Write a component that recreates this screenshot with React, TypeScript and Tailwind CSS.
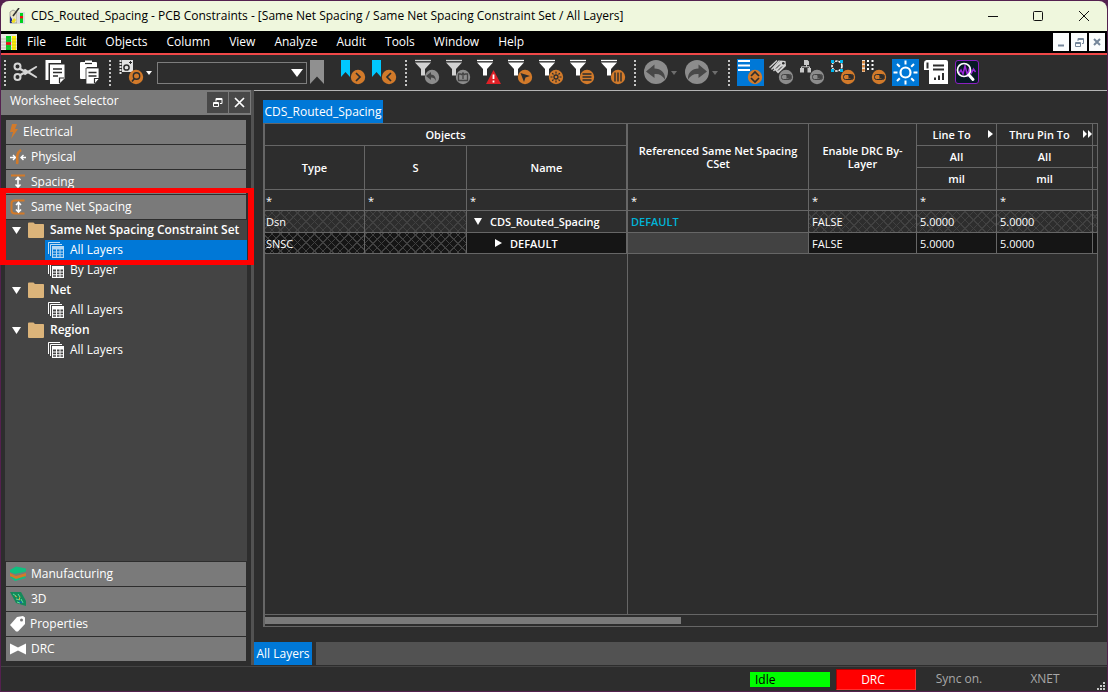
import type { ReactNode } from "react";

const HATCH =
  "bg-[repeating-linear-gradient(45deg,#414141_0_1px,transparent_1px_6px),repeating-linear-gradient(-45deg,#414141_0_1px,transparent_1px_6px)]";

const ORANGE = "#d27a2a";

function Icon({ children, w = 27 }: { children: ReactNode; w?: number }) {
  return (
    <svg width={w} height={27} viewBox={`0 0 ${w} 27`} fill="none" aria-hidden="true" className="shrink-0">
      {children}
    </svg>
  );
}

function ToolButton({ label, active, children }: { label: string; active?: boolean; children: ReactNode }) {
  return (
    <button type="button" aria-label={label} className={active ? "shrink-0 bg-[#0078d7]" : "shrink-0"}>
      <Icon>{children}</Icon>
    </button>
  );
}

function Grip() {
  return (
    <span className="h-[26px] w-[2px] shrink-0 bg-[repeating-linear-gradient(#c4c4c4_0_2px,transparent_2px_4px)]" />
  );
}

function Badge({ color = ORANGE, children }: { color?: string; children?: ReactNode }) {
  return (
    <>
      <circle cx="18" cy="18" r="7.2" fill={color} />
      {children}
    </>
  );
}

function Funnel({ color = "#fff" }: { color?: string }) {
  return (
    <>
      <path d="M1 1.500h16" stroke={color} strokeWidth="1.300" />
      <path d="M1 3.500h16l-6 6.500v6.500h-4v-6.500z" fill={color} />
    </>
  );
}

function Toggle({ color, ink }: { color: string; ink: string }) {
  return (
    <Badge color={color}>
      <rect x="13.500" y="15.500" width="10" height="5" rx="2" stroke={ink} strokeWidth="1" />
      <rect x="18" y="16" width="5" height="4" rx="1" fill={ink} />
      <path d="M18.500 17v2.500h2" stroke={color} strokeWidth=".5" />
    </Badge>
  );
}

function SmallCaret({ color }: { color: string }) {
  return (
    <svg width="6" height="4" viewBox="0 0 6 4" aria-hidden="true" className="shrink-0">
      <path d="M0 0h6l-3 4z" fill={color} />
    </svg>
  );
}

function Toolbar() {
  return (
    <div className="flex h-[35px] shrink-0 items-center overflow-hidden pl-[3px]">
      <Grip />
      <div className="ml-[6px] flex gap-[5px]">
        <ToolButton label="Cut">
          <g stroke="#d6d6d6" strokeWidth="2">
            <circle cx="5.500" cy="7.500" r="3" />
            <circle cx="5.500" cy="18" r="3" />
          </g>
          <path d="M7.500 9.500l6 3.500-6 3.500" stroke="#d6d6d6" strokeWidth="2.200" />
          <path d="M11 14.500l13-7.500c1.500.2 1.500.8.500 1.800L13 16.200z" fill="#d6d6d6" />
          <path d="M11 11.500l13 7.500c1.500-.2 1.500-.8.500-1.800L13 9.800z" fill="#d6d6d6" />
        </ToolButton>
        <ToolButton label="Copy">
          <path d="M3 21V2.500h14" stroke="#fff" strokeWidth="3" />
          <path d="M6 5.500h14.500v14L15 25H6z" fill="#fff" />
          <path d="M9 10h9M9 13.500h9M9 17h5" stroke="#2d2d2d" strokeWidth="1.600" />
          <path d="M15.500 24v-5H20" stroke="#2d2d2d" strokeWidth="1.200" />
        </ToolButton>
      </div>
      <div className="ml-2 flex">
        <ToolButton label="Paste">
          <path d="M1 4a1 1 0 011-1h4V1.500h7V3h4a1 1 0 011 1v4H8v12H2a1 1 0 01-1-1z" fill="#fff" />
          <path d="M6 4.500h7" stroke="#2d2d2d" strokeWidth="1.200" />
          <path d="M7 9h13v11l-4.500 5H7z" fill="#fff" stroke="#2d2d2d" strokeWidth=".800" />
          <path d="M9.500 13.500h8M9.500 17h8" stroke="#2d2d2d" strokeWidth="1.500" />
          <path d="M15.500 24v-4.500H20" stroke="#2d2d2d" strokeWidth="1.200" />
        </ToolButton>
      </div>
      <div className="ml-[3px] flex items-center">
        <Grip />
        <span className="ml-[7px] flex items-center gap-px">
          <ToolButton label="Find">
            <path d="M4 1h11v12H4z" fill="#e2e2e2" />
            <path d="M2.500 1v14" stroke="#e2e2e2" strokeWidth="2" strokeDasharray="2 1" />
            <circle cx="8.500" cy="8.500" r="2.600" stroke="#2d2d2d" strokeWidth="1.500" />
            <path d="M11 3.500h3M12.500 2v3" stroke="#2d2d2d" />
            <Badge>
              <circle cx="18.500" cy="17" r="3.200" stroke="#2d2d2d" strokeWidth="1.400" />
              <path d="M16.500 19.500l-2.500 3" stroke="#2d2d2d" strokeWidth="1.600" />
            </Badge>
          </ToolButton>
          <SmallCaret color="#fff" />
        </span>
      </div>
      <div className="relative ml-[5px] flex h-[22px] w-[150px] shrink-0 items-center">
        <select
          aria-label="Find text"
          className="h-full w-full appearance-none border border-[#7d7d7d] bg-[#2d2d2d] text-[12px] text-white"
        />
        <svg width="12" height="8" viewBox="0 0 12 8" aria-hidden="true" className="pointer-events-none absolute right-1">
          <path d="M0 0h12l-6 8z" fill="#fff" />
        </svg>
      </div>
      <button type="button" aria-label="Bookmark" className="ml-[3px] shrink-0">
        <Icon w={15}>
          <path d="M0 1h14v24l-7-7.500-7 7.500z" fill="#909090" />
        </Icon>
      </button>
      <div className="ml-[15px] flex gap-1">
        <ToolButton label="Next bookmark">
          <path d="M1 1h9v17l-4.500-5-4.500 5z" fill="#00c8ff" />
          <Badge>
            <path d="M16 14l4 4-4 4" stroke="#2d2d2d" strokeWidth="1.700" />
          </Badge>
        </ToolButton>
        <ToolButton label="Previous bookmark">
          <path d="M1 1h9v17l-4.500-5-4.500 5z" fill="#00c8ff" />
          <Badge>
            <path d="M20 14l-4 4 4 4" stroke="#2d2d2d" strokeWidth="1.700" />
          </Badge>
        </ToolButton>
      </div>
      <div className="ml-[7px] flex items-center">
        <Grip />
      </div>
      <div className="ml-[7px] flex gap-1">
        <ToolButton label="Undo filter">
          <Funnel color="#d2d2d2" />
          <Badge color="#8c8c8c">
            <path d="M17 13l-5 4 5 4v-2.500c2.500 0 4 1 4.800 3.500.3-4-1.800-6.500-4.800-6.600z" fill="#444" />
          </Badge>
        </ToolButton>
        <ToolButton label="Restore filter">
          <Funnel color="#d2d2d2" />
          <Badge color="#8c8c8c">
            <path d="M16 15h-2.500v6.500h9V15H20" stroke="#444" strokeWidth="1.300" />
            <path d="M18 20v-6M16 16l2-2 2 2" stroke="#444" strokeWidth="1.300" />
          </Badge>
        </ToolButton>
        <ToolButton label="Filter errors">
          <Funnel />
          <path d="M17.500 11l7.500 14H10z" fill="#e02026" />
          <path d="M17.500 15.500v4.500M17.500 21.500v2" stroke="#fff" strokeWidth="1.800" />
        </ToolButton>
        <ToolButton label="Filter selection">
          <Funnel />
          <Badge>
            <path d="M13.500 14l9.500 3-4.500 1.500L17 23z" fill="#2d2d2d" />
          </Badge>
        </ToolButton>
        <ToolButton label="Filter highlighted">
          <Funnel />
          <Badge>
            <circle cx="18" cy="18" r="2" stroke="#2d2d2d" strokeWidth="1.300" />
            <path
              d="M18 12.500v2M18 21.500v2M12.500 18h2M21.500 18h2M14.200 14.200l1.300 1.300M20.500 20.500l1.300 1.300M14.200 21.800l1.300-1.300M20.500 15.500l1.300-1.300"
              stroke="#2d2d2d"
              strokeWidth="1.200"
            />
          </Badge>
        </ToolButton>
        <ToolButton label="Filter rows">
          <Funnel />
          <Badge>
            <path d="M13.500 15h9M13.500 18h9M13.500 21h9" stroke="#2d2d2d" strokeWidth="1.400" />
          </Badge>
        </ToolButton>
        <ToolButton label="Filter columns">
          <Funnel />
          <Badge>
            <path d="M15 13.500v9M18 13.500v9M21 13.500v9" stroke="#2d2d2d" strokeWidth="1.400" />
          </Badge>
        </ToolButton>
      </div>
      <div className="ml-[7px] flex items-center">
        <Grip />
        <span className="ml-[7px] flex items-center gap-[1px]">
          <ToolButton label="Undo">
            <circle cx="13" cy="13" r="12" fill="#8c8c8c" />
            <path d="M11.500 5.500L3 12.500l8.500 6.500v-4c5-.4 8 1.500 10.500 5.500.3-7-4-10.800-10.500-11z" fill="#484848" />
          </ToolButton>
          <SmallCaret color="#6e6e6e" />
        </span>
        <span className="ml-[7px] flex items-center gap-[1px]">
          <ToolButton label="Redo">
            <circle cx="13" cy="13" r="12" fill="#8c8c8c" />
            <path d="M14.500 5.500l8.500 7-8.500 6.500v-4c-5-.4-8 1.500-10.500 5.500-.3-7 4-10.800 10.500-11z" fill="#484848" />
          </ToolButton>
          <SmallCaret color="#6e6e6e" />
        </span>
      </div>
      <div className="ml-[10px] flex items-center">
        <Grip />
      </div>
      <div className="ml-[7px] flex gap-1">
        <ToolButton label="Expand rows" active>
          <path d="M1 2h12M1 6.500h12M1 11h12" stroke="#fff" strokeWidth="2" />
          <Badge>
            <path d="M14 17l4-4 4 4M14 19l4 4 4-4" stroke="#2d2d2d" strokeWidth="1.700" />
          </Badge>
        </ToolButton>
        <ToolButton label="Toggle tags">
          <path d="M1.500 8.500l7.500-7M3.500 10.500l8-9M5.500 12l2.500-3" stroke="#d2d2d2" strokeWidth="1.300" />
          <path d="M5 9l7.500-7.500 5 .5.500 5L10 14.500z" fill="#d2d2d2" />
          <circle cx="15.300" cy="4.300" r="1.300" fill="#2d2d2d" />
          <path d="M8 9.500l4-4M10 11.500l4-4" stroke="#2d2d2d" />
          <Toggle color="#8c8c8c" ink="#444" />
        </ToolButton>
        <ToolButton label="Toggle hierarchy">
          <path d="M5 1h3.500L10 2.500V6H5zM1 9h4v4.500H1zM8.500 9H12v4.500H8.500z" fill="#c8c8c8" />
          <path d="M7.500 6v2M2.500 9V7.800h8V9" stroke="#c8c8c8" />
          <Toggle color="#8c8c8c" ink="#444" />
        </ToolButton>
        <ToolButton label="Toggle region">
          <circle cx="7" cy="7" r="5" stroke="#fff" strokeWidth="1.600" strokeDasharray="2.500 1" />
          <path d="M1 1h3v3H1zM10 1h3v3h-3zM1 10h3v3H1zM10 10h3v3h-3z" fill="#00b8f0" />
          <Toggle color={ORANGE} ink="#2d2d2d" />
        </ToolButton>
        <ToolButton label="Toggle pins">
          <path d="M1 1h3v12H1z" fill="#f0e4d8" />
          <path d="M2.500 2v11" stroke={ORANGE} strokeWidth="2.500" strokeDasharray="2.500 1.500" />
          <path d="M7 1v12M11.500 1v12" stroke="#fff" strokeWidth="2" strokeDasharray="2 2" />
          <Toggle color={ORANGE} ink="#2d2d2d" />
        </ToolButton>
        <ToolButton label="Highlight" active>
          <circle cx="13.500" cy="13.500" r="5" stroke="#fff" strokeWidth="2.200" />
          <path
            d="M13.500 1.500v4M13.500 21.500v4M1.500 13.500h4M21.500 13.500h4M5 5l2.800 2.800M19.200 19.200L22 22M5 22l2.800-2.800M19.200 7.800L22 5"
            stroke="#fff"
            strokeWidth="2"
          />
        </ToolButton>
        <ToolButton label="Report">
          <path d="M3.500 1H23a2 2 0 012 2v22H6V11H1V4a3 3 0 012.500-3z" fill="#fff" />
          <path d="M3.500 3.500H5.500v6h-2z" fill="#2d2d2d" />
          <path d="M10 6.500h11M10 10.500h11" stroke="#2d2d2d" strokeWidth="1.800" />
          <path d="M12 21v-2.500M16 21v-4.500M20 21v-7" stroke="#2d2d2d" strokeWidth="2" />
        </ToolButton>
        <ToolButton label="Signal analysis">
          <rect x="1.500" y="1.500" width="23" height="23" rx="2.500" fill="#061a24" stroke="#8a1fc0" />
          <path d="M5 14l2-3 2 4 2-8 2.500 9 2-7 2 5 2-4 2 3" stroke="#9a25d8" strokeWidth="1.500" />
          <circle cx="10" cy="11" r="6.500" stroke="#fff" strokeWidth="1.700" />
          <path d="M15 16l4 4.500" stroke="#fff" strokeWidth="3" strokeLinecap="round" />
        </ToolButton>
      </div>
    </div>
  );
}

function SheetMark() {
  return (
    <svg width="16" height="16" viewBox="0 0 16 16" aria-hidden="true" className="shrink-0">
      <path d="M0 0h16v16H0z" fill="#e8e8e0" />
      <path d="M5 2h5v14H5z" fill="#00d020" />
      <path d="M5 8h5v3H5z" fill="#f01010" />
      <path d="M11 2h4v14h-4z" fill="#fff200" />
      <path d="M0 5h16M0 8h16M0 11h16M0 14h16" stroke="#8a8a70" strokeWidth=".4" />
    </svg>
  );
}

function TitleBar() {
  return (
    <header className="flex h-[30px] shrink-0 items-center overflow-hidden rounded-t-lg bg-[#eff7dd] pl-2 text-black">
      <svg width="16" height="16" viewBox="0 0 16 16" aria-hidden="true" className="shrink-0">
        <path d="M1 4l3-2 4 2v11H1z" fill="#e9e6c8" stroke="#777" strokeWidth=".6" />
        <path d="M8 4h8v12H8z" fill="#dcdcdc" />
        <path d="M11 5h3v10h-3z" fill="#00d020" />
        <path d="M11 8h3v2.500h-3z" fill="#f01010" />
        <path d="M10 0L4 8" stroke="#333" strokeWidth="1.500" />
        <path d="M1 8l2 3v4H1z" fill="#1c2a90" />
        <path d="M2 14l3-4 2 2-2 3z" fill="#f0e020" />
      </svg>
      <h1 className="ml-[6px] flex-1 truncate text-[12px]">
        CDS_Routed_Spacing - PCB Constraints - [Same Net Spacing / Same Net Spacing Constraint Set / All Layers]
      </h1>
      <button type="button" aria-label="Minimize" className="flex h-full w-[45px] items-center justify-center">
        <svg width="10" height="10" aria-hidden="true"><path d="M0 5.500h10" stroke="#111" /></svg>
      </button>
      <button type="button" aria-label="Maximize" className="flex h-full w-[45px] items-center justify-center">
        <svg width="10" height="10" aria-hidden="true"><rect x=".5" y=".5" width="9" height="9" rx="1" fill="none" stroke="#111" /></svg>
      </button>
      <button type="button" aria-label="Close" className="flex h-full w-[47px] items-center justify-center">
        <svg width="10" height="10" aria-hidden="true"><path d="M0 0l10 10M10 0L0 10" stroke="#111" /></svg>
      </button>
    </header>
  );
}

const MENUS = ["File", "Edit", "Objects", "Column", "View", "Analyze", "Audit", "Tools", "Window", "Help"];

function MenuBar() {
  return (
    <div className="flex h-6 shrink-0 items-center border-b-2 border-[#f04848] bg-black pr-[2px]">
      <SheetMark />
      <nav className="ml-[10px] flex flex-1 gap-[19px]">
        {MENUS.map((m) => (
          <button key={m} type="button">{m}</button>
        ))}
      </nav>
      <div className="flex gap-[2px]">
        <button type="button" aria-label="Minimize sheet" className="h-[18px] w-4 bg-[#fbfdfd]">
          <svg width="16" height="18" aria-hidden="true"><path d="M5 12.500h6" stroke="#74869a" strokeWidth="2" /></svg>
        </button>
        <button type="button" aria-label="Restore sheet" className="h-[18px] w-4 bg-[#fbfdfd]">
          <svg width="16" height="18" aria-hidden="true" fill="none" stroke="#74869a">
            <path d="M7 8V5.500h5.500v5H11M7 6.500h5M4.500 9.500h5v4h-5zM4.500 10.500h5" />
          </svg>
        </button>
        <button type="button" aria-label="Close sheet" className="h-[18px] w-4 bg-[#fbfdfd]">
          <svg width="16" height="18" aria-hidden="true"><path d="M5 6l6 6M11 6l-6 6" stroke="#74869a" strokeWidth="2" /></svg>
        </button>
      </div>
    </div>
  );
}

function SideIcon({ children, w = 16 }: { children: ReactNode; w?: number }) {
  return (
    <svg width={w} height={16} viewBox={`0 0 ${w} 16`} fill="none" aria-hidden="true" className="shrink-0">
      {children}
    </svg>
  );
}

function Section({ label, icon }: { label: string; icon: ReactNode }) {
  return (
    <button
      type="button"
      className="flex h-6 w-full shrink-0 items-center gap-[5px] bg-[#7a7a7a] pl-1 text-left"
    >
      {icon}
      {label}
    </button>
  );
}

function Folder({ label }: { label: string }) {
  return (
    <div className="flex h-5 items-center pl-[7px] font-semibold">
      <svg width="9" height="7" viewBox="0 0 9 7" aria-hidden="true"><path d="M0 0h9L4.500 7z" fill="#fff" /></svg>
      <svg width="16" height="16" viewBox="0 0 16 16" aria-hidden="true" className="ml-[7px]">
        <path d="M0 1.500Q0 .5 1 .5h4.500L7 2h8.200q.8 0 .8.800V15q0 1-1 1H1q-1 0-1-1z" fill="#dcb47a" />
      </svg>
      <span className="ml-[6px] whitespace-nowrap">{label}</span>
    </div>
  );
}

function Sheet({ label, selected }: { label: string; selected?: boolean }) {
  return (
    <button
      type="button"
      className={`ml-10 flex h-5 items-center gap-[5px] pl-[3px] text-left ${selected ? "bg-[#0078d7]" : ""}`}
    >
      <SideIcon w={17}>
        <path d="M.5 12V.5H12M2.500 14V2.500H14" stroke="#fff" strokeOpacity={selected ? 0.75 : 1} />
        <path d="M4 4h12v12H4z" fill={selected ? "#b4d8f4" : "#fff"} />
        <path
          d="M5 7.500h3v2H5zM9 7.500h2.500v2H9zM12.500 7.500h2.500v2h-2.500zM5 10.500h3v1.700H5zM9 10.500h2.500v1.700H9zM12.500 10.500h2.500v1.700h-2.500zM5 13.200h3v1.600H5zM9 13.200h2.500v1.600H9zM12.500 13.200h2.500v1.600h-2.500z"
          fill={selected ? "#0078d7" : "#444"}
        />
      </SideIcon>
      {label}
    </button>
  );
}

function Sidebar() {
  return (
    <aside className="relative flex w-[250px] shrink-0 flex-col">
      <div className="flex h-[25px] shrink-0 items-center gap-px bg-[#7a7a7a] pr-px pl-[9px]">
        <h2 className="flex-1 pb-[3px]">Worksheet Selector</h2>
        <button type="button" aria-label="Float panel" className="h-[21px] w-[21px] bg-[#484848]">
          <svg width="21" height="21" fill="none" stroke="#fff" aria-hidden="true">
            <path d="M9 9.500V6.500h6v5h-2M9 7.500h6M6.500 10.500h5v4h-5zM6.500 11.500h5" />
          </svg>
        </button>
        <button type="button" aria-label="Close panel" className="h-[21px] w-[21px] bg-[#484848]">
          <svg width="21" height="21" aria-hidden="true"><path d="M6 6l9 9M15 6l-9 9" stroke="#fff" strokeWidth="1.700" /></svg>
        </button>
      </div>
      <div className="flex flex-col gap-px px-[5px] pt-[5px] pb-px">
        <Section
          label="Electrical"
          icon={
            <SideIcon w={8}>
              <path d="M2 0h5L5 5h3L1 15l2-7H0z" fill={ORANGE} />
            </SideIcon>
          }
        />
        <Section
          label="Physical"
          icon={
            <SideIcon>
              <path d="M0 8.500h5M11 8.500h5M3 6l2.500 2.500L3 11M13.500 6L11 8.500l2.500 2.500" stroke="#fff" strokeWidth="1.400" />
              <path d="M7 15c1-4-.5-6 .5-9C8 3.500 9.500 2 11 1" stroke={ORANGE} strokeWidth="2.500" />
            </SideIcon>
          }
        />
        <Section
          label="Spacing"
          icon={
            <SideIcon>
              <path d="M1 1.500h14M1 15h14" stroke={ORANGE} strokeWidth="2" />
              <path d="M8 4v8M5.500 6L8 3.500 10.500 6M5.500 10.500L8 13l2.500-2.500" stroke="#fff" strokeWidth="1.600" />
            </SideIcon>
          }
        />
        <Section
          label="Same Net Spacing"
          icon={
            <SideIcon>
              <path d="M14.500 1.500H5Q1.500 1.500 1.500 4v7.500Q1.500 14.500 5 14.500h9.500" stroke={ORANGE} strokeWidth="2" />
              <path d="M8.500 4v8M6 6l2.500-2.500L11 6M6 10.500L8.500 13l2.500-2.500" stroke="#fff" strokeWidth="1.600" />
            </SideIcon>
          }
        />
      </div>
      <div className="mx-1 flex flex-1 flex-col bg-[#444]">
        <Folder label="Same Net Spacing Constraint Set" />
        <Sheet label="All Layers" selected />
        <Sheet label="By Layer" />
        <Folder label="Net" />
        <Sheet label="All Layers" />
        <Folder label="Region" />
        <Sheet label="All Layers" />
      </div>
      <div className="flex flex-col gap-px px-[5px] pt-px pb-1">
        <Section
          label="Manufacturing"
          icon={
            <SideIcon>
              <path d="M0 11l5 4 11-3-2-3z" fill="#10c080" />
              <path d="M0 7l6 3 10-3v3l-10 3-6-3z" fill={ORANGE} />
              <path d="M0 4l6-3.500L16 2.500v3L5 8 0 6z" fill="#10c080" />
            </SideIcon>
          }
        />
        <Section
          label="3D"
          icon={
            <SideIcon>
              <path d="M0 1h11l5 9v5L6 12z" fill="#148a5a" />
              <path d="M3 3l3 2M8 3l2 3M6 8l4 1M11 8l2 4M7 11l3 1" stroke="#5ee0a0" />
              <path d="M5 5l2 1M10 6l-1 3" stroke="#d8b040" />
              <path d="M9 10l3 2" stroke="#1560b0" strokeWidth="1.500" />
            </SideIcon>
          }
        />
        <Section
          label="Properties"
          icon={
            <SideIcon w={15}>
              <path d="M0 9l7-8 6-1 2 1.500V8l-7 7.500H6z" fill="#fff" />
              <circle cx="11.500" cy="4" r="1.500" fill="#7a7a7a" />
            </SideIcon>
          }
        />
        <Section
          label="DRC"
          icon={
            <SideIcon>
              <path d="M0 2.500l8 4 8-4v11l-8-4-8 4z" fill="#fff" />
            </SideIcon>
          }
        />
      </div>
      <div className="pointer-events-none absolute top-[98px] -left-px h-[77px] w-[254px] border-[6px] border-y-[5px] border-[#ff0000]" />
    </aside>
  );
}

const TH = "border-r border-b border-[#666] px-2 text-center font-semibold";
const TD = "border-r border-b border-[#666] px-px whitespace-nowrap";
const TDV = "border-r border-b border-[#666] px-[3px] whitespace-nowrap overflow-hidden";

function ConstraintTable() {
  return (
    <table className="w-full table-fixed border-separate border-spacing-0 text-[11px] leading-[13px]">
      <colgroup>
        <col className="w-[100px]" />
        <col className="w-[102px]" />
        <col className="w-[161px]" />
        <col className="w-[181px]" />
        <col className="w-[108px]" />
        <col className="w-[80px]" />
        <col className="w-[96px]" />
        <col />
      </colgroup>
      <thead>
        <tr className="h-[22px]">
          <th colSpan={3} className={`${TH} border-r-2`}>Objects</th>
          <th rowSpan={3} className={TH}>Referenced Same Net Spacing CSet</th>
          <th rowSpan={3} className={TH}>Enable DRC By-Layer</th>
          <th className={`${TH} relative`}>
            <span className="pr-[10px] whitespace-nowrap">Line To</span>
            <svg width="5" height="8" aria-hidden="true" className="absolute top-[6px] right-[3px]">
              <path d="M0 0l5 4-5 4z" fill="#fff" />
            </svg>
          </th>
          <th className={`${TH} relative`}>
            <span className="pr-[10px] whitespace-nowrap">Thru Pin To</span>
            <svg width="9" height="8" aria-hidden="true" className="absolute top-[6px] right-0">
              <path d="M0 0l4 4-4 4zM5 0l4 4-4 4z" fill="#fff" />
            </svg>
          </th>
          <th className="border-b border-[#666]" />
        </tr>
        <tr className="h-[22px]">
          <th rowSpan={2} className={TH}>Type</th>
          <th rowSpan={2} className={TH}>S</th>
          <th rowSpan={2} className={`${TH} border-r-2`}>Name</th>
          <th className={TH}>All</th>
          <th className={TH}>All</th>
          <th className="border-b border-[#666]" />
        </tr>
        <tr className="h-[22px]">
          <th className={TH}>mil</th>
          <th className={TH}>mil</th>
          <th className="border-b border-[#666]" />
        </tr>
      </thead>
      <tbody>
        <tr className="h-[21px]">
          <td className={TD}>*</td>
          <td className={TDV}>*</td>
          <td className={`${TDV} border-r-2`}>*</td>
          <td className={TDV}>*</td>
          <td className={TDV}>*</td>
          <td className={TDV}>*</td>
          <td className={TDV}>*</td>
          <td className="border-b border-[#666]" />
        </tr>
        <tr className="h-[22px]">
          <td className={`${TD} ${HATCH}`}>Dsn</td>
          <td className={`${TD} ${HATCH}`} />
          <td className={`${TD} border-r-2 font-semibold`}>
            <span className="flex items-center gap-2 pl-[6px]">
              <svg width="8" height="7" aria-hidden="true"><path d="M0 0h8L4 7z" fill="#fff" /></svg>
              CDS_Routed_Spacing
            </span>
          </td>
          <td className={`${TDV} font-semibold text-[#00b4d8]`}>DEFAULT</td>
          <td className={`${TDV} ${HATCH}`}>FALSE</td>
          <td className={`${TDV} ${HATCH}`}>5.0000</td>
          <td className={`${TDV} ${HATCH}`}>5.0000</td>
          <td className={`border-b border-[#666] ${HATCH}`} />
        </tr>
        <tr className="h-[21px] bg-[#151515]">
          <td className={`${TD} ${HATCH}`}>SNSC</td>
          <td className={`${TD} ${HATCH}`} />
          <td className={`${TD} border-r-2 font-semibold`}>
            <span className="flex items-center gap-2 pl-[27px]">
              <svg width="7" height="8" aria-hidden="true"><path d="M0 0l7 4-7 4z" fill="#fff" /></svg>
              DEFAULT
            </span>
          </td>
          <td className={`${TDV} bg-[#424242]`} />
          <td className={TDV}>FALSE</td>
          <td className={TDV}>5.0000</td>
          <td className={TDV}>5.0000</td>
          <td className="border-b border-[#666]" />
        </tr>
      </tbody>
    </table>
  );
}

function Workspace() {
  return (
    <main className="flex min-w-0 flex-1 flex-col border-t border-[#b4b4b4]">
      <div className="flex min-h-0 flex-1 flex-col pt-[9px] pr-[9px] pb-[15px] pl-[9px]">
        <button type="button" className="h-[23px] w-[120px] shrink-0 bg-[#0078d7]">CDS_Routed_Spacing</button>
        <div className="flex min-h-0 flex-1 flex-col border border-l-2 border-[#666]">
          <ConstraintTable />
          <div className="flex flex-1">
            <div className="w-[363px] border-r border-[#666]" />
          </div>
          <div className="h-3 border-t border-[#666] pt-[2px]">
            <div className="h-[7px] w-1/2 bg-[#7a7a7a]" />
          </div>
        </div>
      </div>
      <div className="flex h-[23px] shrink-0 gap-1">
        <button type="button" className="w-[58px] bg-[#0078d7] whitespace-nowrap">All Layers</button>
        <div className="flex-1 bg-[#525252]" />
      </div>
    </main>
  );
}

function StatusBar() {
  return (
    <footer className="flex h-[25px] shrink-0 items-center justify-end border-t border-[#444] pr-[2px] text-center text-[#a8a8a8]">
      <span className="h-[15px] w-20 bg-[#00ff00] pl-[5px] text-left leading-[15px] text-black">Idle</span>
      <span className="ml-[6px] h-[21px] w-20 border border-t-[#b00000] border-r-[#ff3030] border-b-[#ff3030] border-l-[#b00000] bg-[#ff0000] pr-[6px] leading-[19px] text-white">
        DRC
      </span>
      <span className="w-[86px]">Sync on.</span>
      <span className="w-[86px]">XNET</span>
      <svg width="17" height="24" aria-hidden="true" fill="#c8c8c8">
        <path d="M15 15h2v2h-2zM12 18h2v2h-2zM15 18h2v2h-2zM9 21h2v2H9zM12 21h2v2h-2zM15 21h2v2h-2z" />
      </svg>
    </footer>
  );
}

export default function App() {
  return (
    <div className="flex h-screen flex-col bg-[#54214f] p-px font-['Open_Sans','Noto_Sans',sans-serif] text-[12px] leading-4 text-white">
      <TitleBar />
      <MenuBar />
      <div className="flex min-h-0 flex-1 flex-col bg-[#2d2d2d]">
        <Toolbar />
        <div className="flex min-h-0 flex-1">
          <Sidebar />
          <div className="w-[3px] shrink-0 bg-[#525252]" />
          <Workspace />
        </div>
        <div className="h-px shrink-0" />
        <StatusBar />
      </div>
    </div>
  );
}
